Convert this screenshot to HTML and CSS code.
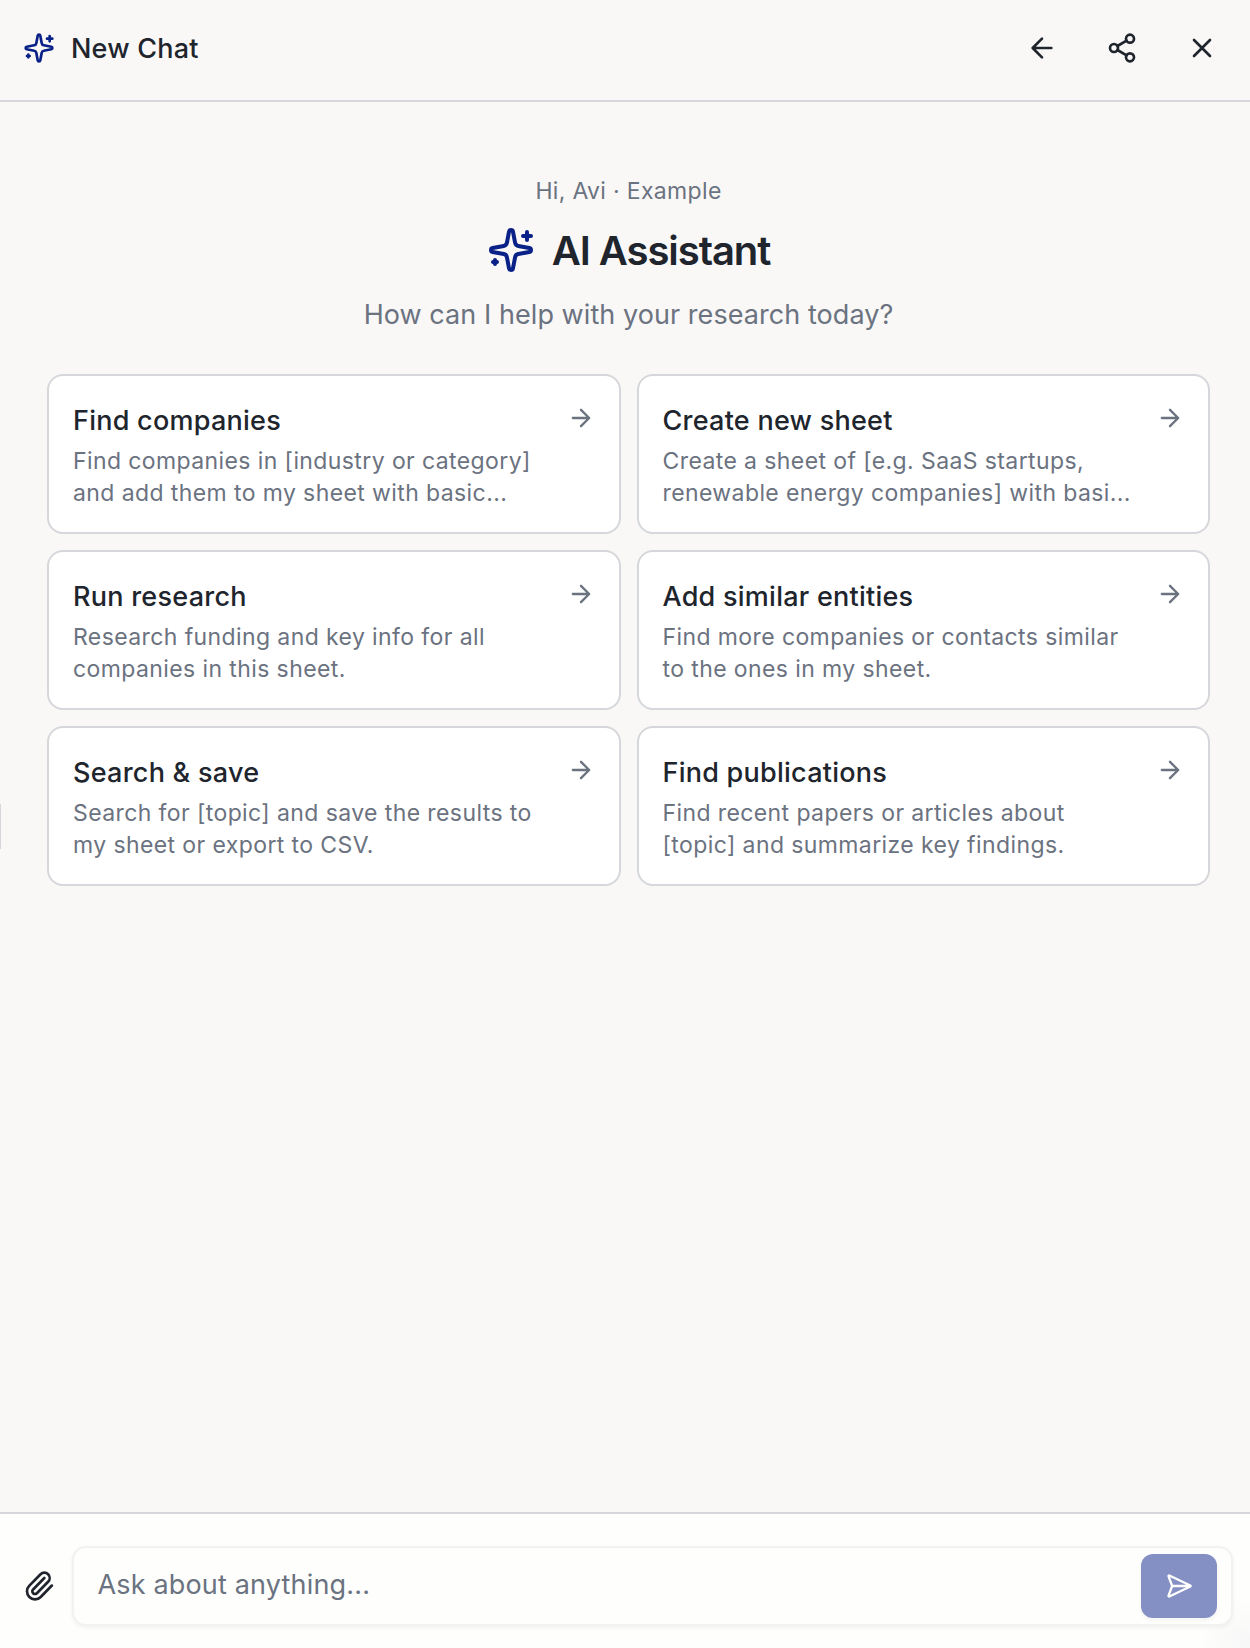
FILE: index.html
```html
<!DOCTYPE html>
<html lang="en">
<head>
<meta charset="utf-8">
<title>New Chat</title>
<link rel="stylesheet" href="styles.css">
</head>
<body>
<svg class="defs" aria-hidden="true">
  <symbol id="sparkles" viewBox="0 0 24 24">
    <path d="M11.017 2.814a1 1 0 0 1 1.966 0l1.051 5.558a2 2 0 0 0 1.594 1.594l5.558 1.051a1 1 0 0 1 0 1.966l-5.558 1.051a2 2 0 0 0-1.594 1.594l-1.051 5.558a1 1 0 0 1-1.966 0l-1.051-5.558a2 2 0 0 0-1.594-1.594l-5.558-1.051a1 1 0 0 1 0-1.966l5.558-1.051a2 2 0 0 0 1.594-1.594z"/>
    <path d="M20 3v4M22 5h-4M4 17v2M5 18H3"/>
  </symbol>
  <symbol id="arrow-right" viewBox="0 0 24 24"><path d="M5 12h14M12 5l7 7-7 7"/></symbol>
</svg>
<div class="panel">
  <header class="header">
    <svg class="icon icon-brand"><use href="#sparkles"/></svg>
    <h1 class="header-title">New Chat</h1>
    <div class="actions">
      <button class="action" aria-label="Back"><svg class="icon" viewBox="0 0 24 24"><path d="M12 19l-7-7 7-7M19 12H5"/></svg></button>
      <button class="action" aria-label="Share"><svg class="icon" viewBox="0 0 24 24"><circle cx="18" cy="5" r="3"/><circle cx="6" cy="12" r="3"/><circle cx="18" cy="19" r="3"/><path d="M8.59 13.51l6.83 3.98M15.41 6.51l-6.82 3.98"/></svg></button>
      <button class="action" aria-label="Close"><svg class="icon" viewBox="0 0 24 24"><path d="M18 6L6 18M6 6l12 12"/></svg></button>
    </div>
  </header>

  <main class="content">
    <p class="greeting">Hi, Avi · Example</p>
    <h2 class="hero"><svg class="icon icon-hero"><use href="#sparkles"/></svg><span>AI Assistant</span></h2>
    <p class="question">How can I help with your research today?</p>
    <div class="cards">
      <button class="card"><span class="card-text"><span class="card-title">Find companies</span><span class="card-desc">Find companies in [industry or category]<br>and add them to my sheet with basic...</span></span><svg class="icon card-arrow"><use href="#arrow-right"/></svg></button>
      <button class="card"><span class="card-text"><span class="card-title">Create new sheet</span><span class="card-desc">Create a sheet of [e.g. SaaS startups,<br>renewable energy companies] with basi...</span></span><svg class="icon card-arrow"><use href="#arrow-right"/></svg></button>
      <button class="card"><span class="card-text"><span class="card-title">Run research</span><span class="card-desc">Research funding and key info for all<br>companies in this sheet.</span></span><svg class="icon card-arrow"><use href="#arrow-right"/></svg></button>
      <button class="card"><span class="card-text"><span class="card-title">Add similar entities</span><span class="card-desc">Find more companies or contacts similar<br>to the ones in my sheet.</span></span><svg class="icon card-arrow"><use href="#arrow-right"/></svg></button>
      <button class="card"><span class="card-text"><span class="card-title">Search &amp; save</span><span class="card-desc">Search for [topic] and save the results to<br>my sheet or export to CSV.</span></span><svg class="icon card-arrow"><use href="#arrow-right"/></svg></button>
      <button class="card"><span class="card-text"><span class="card-title">Find publications</span><span class="card-desc">Find recent papers or articles about<br>[topic] and summarize key findings.</span></span><svg class="icon card-arrow"><use href="#arrow-right"/></svg></button>
    </div>
  </main>

  <footer class="composer">
    <svg class="icon" viewBox="0 0 24 24"><path d="m16 6-8.414 8.586a2 2 0 0 0 2.829 2.829l8.414-8.586a4 4 0 1 0-5.657-5.657l-8.379 8.551a6 6 0 1 0 8.485 8.485l8.379-8.551"/></svg>
    <div class="input-box">
      <span class="placeholder">Ask about anything...</span>
      <button class="send" aria-label="Send"><svg class="icon icon-send" viewBox="0 0 24 24"><path d="M3.714 3.048a.498.498 0 0 0-.683.627l2.843 7.627a2 2 0 0 1 0 1.396l-2.842 7.627a.498.498 0 0 0 .682.627l18-8.5a.5.5 0 0 0 0-.904zM6 12h16"/></svg></button>
    </div>
  </footer>
  <div class="resize-handle"></div>
</div>
</body>
</html>
```
FILE: styles.css
```css
* { box-sizing: border-box; margin: 0; padding: 0; }

body {
  font-family: Inter, "Liberation Sans", sans-serif;
  color: #20242c;
  background: #f9f8f7;
}

button { font: inherit; color: inherit; border: 0; background: none; text-align: left; }

.defs { display: none; }

.icon {
  width: 32px;
  height: 32px;
  flex: none;
  display: block;
  fill: none;
  stroke: currentColor;
  stroke-width: 2;
  stroke-linecap: round;
  stroke-linejoin: round;
}

.panel {
  position: relative;
  display: flex;
  flex-direction: column;
  height: 1648px;
  overflow: hidden;
}

.header {
  display: flex;
  align-items: center;
  height: 102px;
  padding: 0 16px 4px 23px;
  border-bottom: 2px solid #d5d7db;
}

.icon-brand { color: #0a2287; }

.header-title {
  margin-left: 16px;
  padding-top: 2px;
  font-size: 27px;
  font-weight: 500;
  line-height: 40px;
  letter-spacing: 0.2px;
}

.actions { display: flex; gap: 16px; margin-left: auto; }

.action {
  display: flex;
  align-items: center;
  justify-content: center;
  width: 64px;
  height: 64px;
}

.content {
  flex: 1;
  display: flex;
  flex-direction: column;
  align-items: center;
  padding: 73px 40px 0 47px;
}

.greeting {
  font-size: 23px;
  line-height: 32px;
  letter-spacing: 0.33px;
  color: #6b7280;
}

.hero {
  display: flex;
  align-items: center;
  gap: 17px;
  margin-top: 20px;
  font-size: 40px;
  font-weight: 600;
  line-height: 48px;
  letter-spacing: -1.05px;
}

.icon-hero { width: 48px; height: 48px; margin-top: -2px; color: #0a2287; }

.question {
  margin-top: 20px;
  font-size: 27px;
  line-height: 40px;
  letter-spacing: 0.06px;
  color: #6b7280;
}

.cards {
  display: grid;
  grid-template-columns: 1fr 1fr;
  gap: 16px;
  width: 100%;
  margin-top: 39px;
}

.card {
  display: flex;
  align-items: flex-start;
  justify-content: space-between;
  height: 160px;
  padding: 24px;
  border: 2px solid #d5d7db;
  border-radius: 16px;
  background: #fff;
}

.card-text { display: block; padding-top: 1px; white-space: nowrap; }

.card-title {
  display: block;
  font-size: 27px;
  font-weight: 500;
  line-height: 40px;
  letter-spacing: 0.25px;
}

.card-desc {
  display: block;
  margin-top: 4px;
  font-size: 23px;
  line-height: 32px;
  letter-spacing: 0.4px;
  color: #6b7280;
}

.card-arrow { width: 28px; height: 28px; margin-top: 4px; color: #6b7280; }

.composer {
  display: flex;
  align-items: center;
  gap: 17px;
  height: 136px;
  padding: 10px 17px 0 23px;
  border-top: 2px solid #d5d7db;
  background: radial-gradient(circle at 100% 100%, #f6f6f6, #fefefd 50px) #fefefd;
}

.input-box {
  flex: 1;
  display: flex;
  align-items: center;
  justify-content: space-between;
  height: 80px;
  padding: 0 14px 0 23.5px;
  border: 2px solid #f2f2f2;
  border-radius: 14px;
  background: #fefefd;
  box-shadow: 0 2px 4px rgba(0, 0, 0, 0.05);
}

.placeholder {
  padding-bottom: 2px;
  font-size: 27px;
  line-height: 40px;
  letter-spacing: 0.17px;
  color: #6b7280;
}

.send {
  display: flex;
  align-items: center;
  justify-content: center;
  width: 76px;
  height: 64px;
  border-radius: 12px;
  background: #848fc3;
  color: #fff;
  box-shadow: 0 2px 4px rgba(0, 0, 0, 0.05);
}

.icon-send { width: 28px; height: 28px; }

.resize-handle {
  position: absolute;
  left: 0;
  top: 804px;
  width: 1px;
  height: 45px;
  background: #d5d7db;
}
```
